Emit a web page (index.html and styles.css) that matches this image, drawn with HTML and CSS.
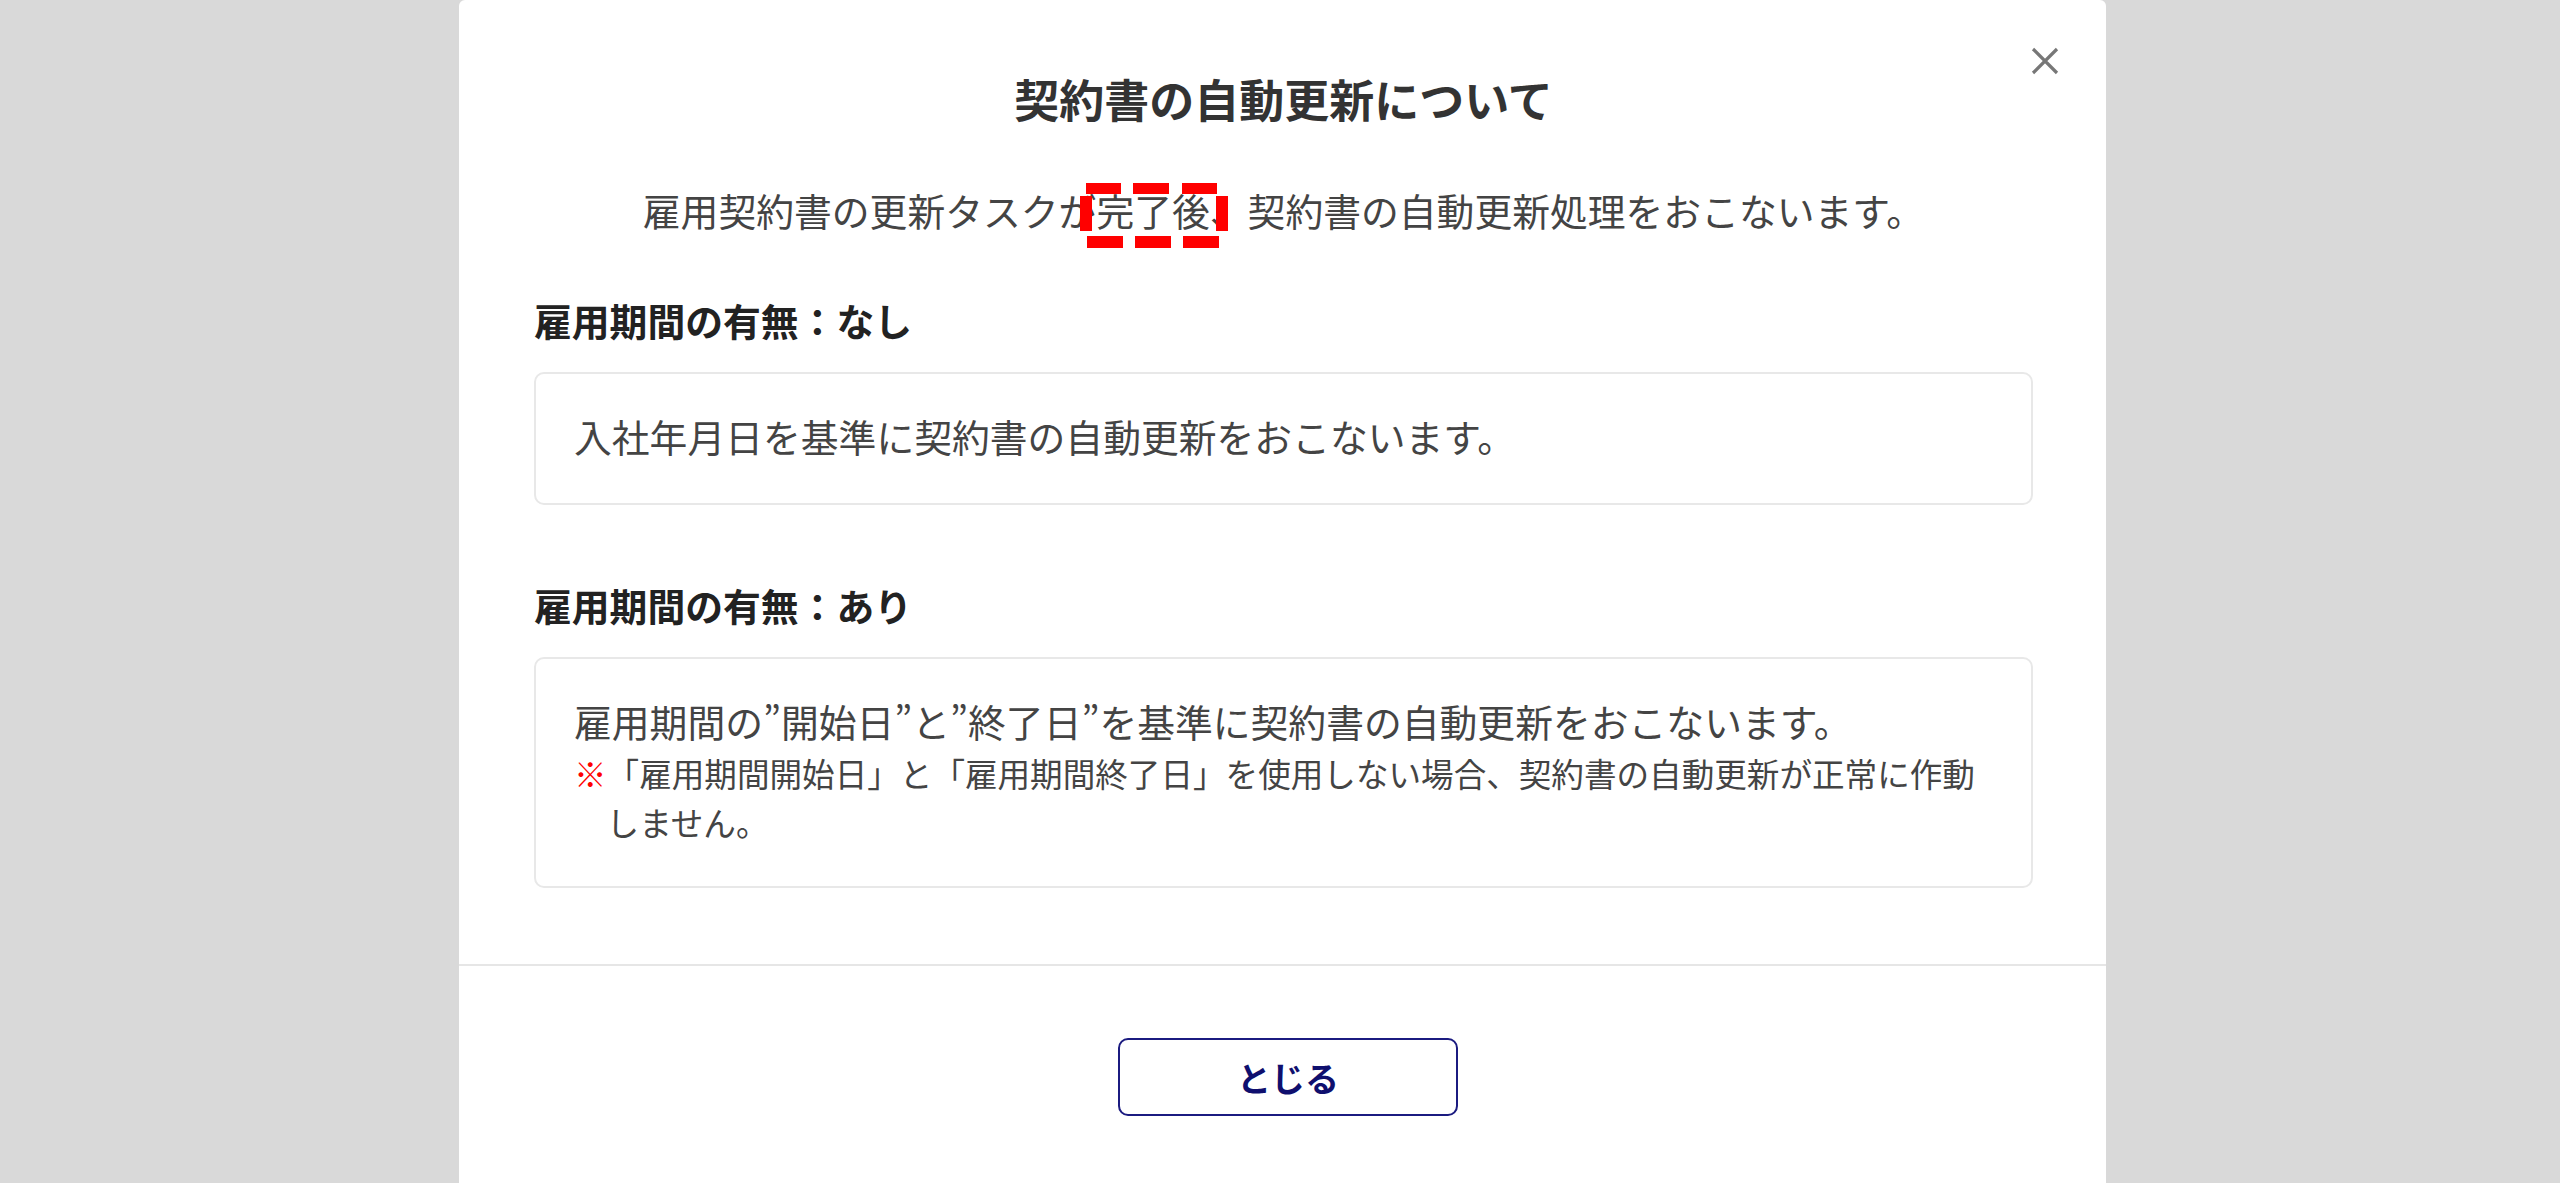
FILE: index.html
```html
<!DOCTYPE html>
<html lang="ja">
<head>
<meta charset="utf-8">
<title>契約書の自動更新について</title>
<link rel="stylesheet" href="styles.css">
</head>
<body>
<div class="modal">
  <button class="close" aria-label="閉じる">
    <svg width="28" height="28" viewBox="0 0 28 28"><path d="M2 2 L26 26 M26 2 L2 26" stroke="#777" stroke-width="3.2" fill="none"/></svg>
  </button>
  <div class="modal-body">
    <h1 class="title">契約書の自動更新について</h1>
    <p class="intro">雇用契約書の更新タスクが<span class="mark">完了後、<svg class="dash" width="148" height="65" viewBox="0 0 148 65"><g fill="#ff0000"><rect x="6" y="0" width="35" height="11"/><rect x="53" y="0" width="36" height="11"/><rect x="102" y="0" width="35" height="11"/><rect x="7" y="53" width="36" height="12"/><rect x="55" y="53" width="36" height="12"/><rect x="103" y="53" width="36" height="12"/><rect x="0" y="13" width="12" height="35"/><rect x="136" y="13" width="12" height="35"/></g></svg></span>契約書の自動更新処理をおこないます。</p>
    <h2 class="heading">雇用期間の有無：なし</h2>
    <div class="box">
      <p class="box-text">入社年月日を基準に契約書の自動更新をおこないます。</p>
    </div>
    <h2 class="heading heading-second">雇用期間の有無：あり</h2>
    <div class="box">
      <p class="box-text">雇用期間の”開始日”と”終了日”を基準に契約書の自動更新をおこないます。</p>
      <p class="note"><span class="kome">※</span>「雇用期間開始日」と「雇用期間終了日」を使用しない場合、契約書の自動更新が正常に作動しません。</p>
    </div>
  </div>
  <div class="modal-footer">
    <button class="btn">とじる</button>
  </div>
</div>
</body>
</html>
```

FILE: styles.css
```css
html, body {
  margin: 0;
  padding: 0;
}
body {
  background: #d9d9d9;
  height: 1183px;
  overflow: hidden;
  font-family: "Noto Sans CJK JP", "Noto Sans", sans-serif;
  color: #444;
}
.modal {
  position: relative;
  margin-left: 459px;
  width: 1647px;
  height: 1183px;
  background: #fff;
  border-radius: 6px 6px 0 0;
  box-sizing: border-box;
}
.close {
  position: absolute;
  top: 47px;
  right: 47px;
  width: 28px;
  height: 28px;
  padding: 0;
  border: 0;
  background: none;
}
.close svg { display: block; }
.modal-body {
  padding: 66px 73px 76px 75px;
}
.title {
  margin: 0 0 50px;
  font-size: 45px;
  line-height: 66px;
  font-weight: 700;
  color: #333;
  text-align: center;
}
.intro {
  margin: 0 0 55px;
  font-size: 37.8px;
  line-height: 55px;
  text-align: center;
  color: #444;
}
.mark {
  position: relative;
}
.dash {
  position: absolute;
  left: -16px;
  top: 1px;
}
.heading {
  margin: 0 0 25px;
  font-size: 37.8px;
  line-height: 55px;
  font-weight: 700;
  color: #222;
}
.heading-second {
  margin-top: 72px;
}
.box {
  border: 2px solid #e8e8e8;
  border-radius: 10px;
  padding: 34px 40px 40px 38px;
}
.box-text {
  margin: 0;
  font-size: 37.8px;
  line-height: 55px;
  color: #444;
}
.note {
  margin: 0;
  font-size: 32.6px;
  line-height: 49px;
  color: #444;
  padding-left: 1em;
  text-indent: -1em;
}
.kome {
  color: #ff0000;
}
.modal-footer {
  border-top: 2px solid #e6e6e6;
  padding-top: 72px;
  padding-left: 11px;
  display: flex;
  justify-content: center;
}
.btn {
  width: 340px;
  height: 78px;
  border: 2px solid #1b1b80;
  border-radius: 10px;
  background: #fff;
  font-family: "Noto Sans CJK JP", "Noto Sans", sans-serif;
  font-size: 34px;
  font-weight: 700;
  color: #0f0f6e;
  padding: 0;
}
```
